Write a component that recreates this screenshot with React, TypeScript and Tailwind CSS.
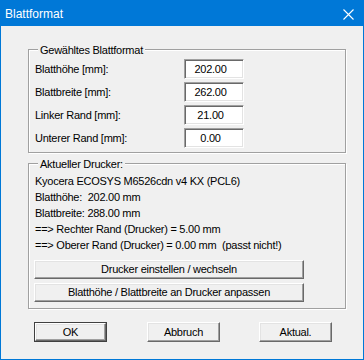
import React from "react";

const font = { fontFamily: '"Liberation Sans", Arial, sans-serif' };

function Field({ value }: { value: string }) {
  return (
    <div className="w-[60px] h-[20px] bg-white border border-t-[#a0a0a0] border-l-[#a0a0a0] border-r-white border-b-white shadow-[inset_1px_1px_0_#696969,inset_-1px_-1px_0_#e3e3e3] flex items-center justify-center pr-[7px] text-[11px] tracking-[-0.25px] text-black">
      {value}
    </div>
  );
}

function Btn({ children, className = "", def = false }: { children: React.ReactNode; className?: string; def?: boolean }) {
  const inner = (
    <div className="w-full h-full border border-t-white border-l-white border-r-[#696969] border-b-[#696969] shadow-[inset_-1px_-1px_0_#a0a0a0,inset_1px_1px_0_#e3e3e3] bg-[#f0f0f0] flex items-center justify-center text-[11px] tracking-[-0.25px] text-black">
      {children}
    </div>
  );
  if (def) {
    return <div className={`border border-[#404040] ${className}`}>{inner}</div>;
  }
  return <div className={className}>{inner}</div>;
}

function Group({ title, className = "", children }: { title: string; className?: string; children: React.ReactNode }) {
  return (
    <div className={`relative ml-[27px] w-[318px] border border-[#a0a0a0] shadow-[inset_1px_1px_0_#fff,1px_1px_0_#fff] ${className}`}>
      <div className="absolute left-[9px] top-[-8px] h-[16px] leading-[16px] px-[2px] bg-[#f0f0f0] text-[11px] tracking-[-0.25px] text-black">
        {title}
      </div>
      {children}
    </div>
  );
}

export default function App() {
  const rows: [string, string][] = [
    ["Blatthöhe [mm]:", "202.00"],
    ["Blattbreite [mm]:", "262.00"],
    ["Linker Rand [mm]:", "21.00"],
    ["Unterer Rand [mm]:", "0.00"],
  ];
  const lines = [
    "Kyocera ECOSYS M6526cdn v4 KX (PCL6)",
    "Blatthöhe:  202.00 mm",
    "Blattbreite: 288.00 mm",
    "==> Rechter Rand (Drucker) = 5.00 mm",
    "==> Oberer Rand (Drucker) = 0.00 mm  (passt nicht!)",
  ];
  return (
    <div style={font} className="w-[364px] h-[360px] border border-[#0078d7] bg-[#f0f0f0] flex flex-col overflow-hidden">
      <div className="h-[25px] bg-[#0078d7] flex items-center justify-between pl-[4px] pr-[9px] shrink-0">
        <span className="text-white text-[12px] leading-none mt-[1px]">Blattformat</span>
        <svg width="11" height="11" viewBox="0 0 11 11" className="mt-[2px]">
          <path d="M0.5 0.5 L10.5 10.5 M10.5 0.5 L0.5 10.5" stroke="#fff" strokeWidth="1.1" />
        </svg>
      </div>

      <Group title="Gewähltes Blattformat" className="mt-[23px] h-[104px]">
        <div className="pt-[9px] pl-[6px] flex flex-col gap-[3px]">
          {rows.map(([l, v]) => (
            <div key={l} className="flex items-center">
              <div className="w-[149px] text-[11px] tracking-[-0.25px] text-black">{l}</div>
              <Field value={v} />
            </div>
          ))}
        </div>
      </Group>

      <Group title="Aktueller Drucker:" className="mt-[10px] h-[146px]">
        <div className="pt-[9px] pl-[5px] flex flex-col">
          {lines.map((t) => (
            <div key={t} className="pl-[1px] h-[16px] leading-[16px] whitespace-pre text-[11px] tracking-[-0.25px] text-black">
              {t}
            </div>
          ))}
          <Btn className="mt-[7px] w-[270px] h-[19px]">Drucker einstellen / wechseln</Btn>
          <Btn className="mt-[4px] w-[270px] h-[19px]">Blatthöhe / Blattbreite an Drucker anpassen</Btn>
        </div>
      </Group>

      <div className="mt-[13px] pl-[33px] flex">
        <Btn def className="w-[73px] h-[20px]">OK</Btn>
        <Btn className="ml-[40px] w-[73px] h-[20px]">Abbruch</Btn>
        <Btn className="ml-[39px] w-[73px] h-[20px]">Aktual.</Btn>
      </div>
    </div>
  );
}
